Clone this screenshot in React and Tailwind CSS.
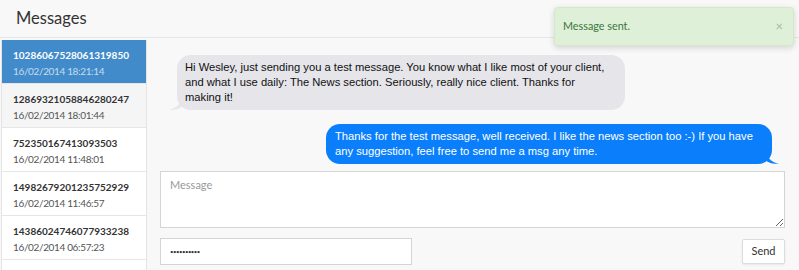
import { useState } from "react";

const threads = [
  { id: "10286067528061319850", date: "16/02/2014 18:21:14" },
  { id: "12869321058846280247", date: "16/02/2014 18:01:44" },
  { id: "752350167413093503", date: "16/02/2014 11:48:01" },
  { id: "14982679201235752929", date: "16/02/2014 11:46:57" },
  { id: "14386024746077933238", date: "16/02/2014 06:57:23" },
];

function Tail({ side, color }) {
  // little curved hook at the bottom corner of a bubble
  if (side === "left") {
    return (
      <svg className="absolute bottom-0 left-[-8px]" width="14" height="16" viewBox="0 0 14 16">
        <path d="M14 0 C13 8 9 14 0 16 C6 16 10 15 14 12 Z" fill={color} />
      </svg>
    );
  }
  return (
    <svg className="absolute bottom-0 right-[-7px]" width="14" height="16" viewBox="0 0 14 16">
      <path d="M0 0 C1 8 5 14 14 16 C8 16 4 15 0 12 Z" fill={color} />
    </svg>
  );
}

export default function App() {
  const [active] = useState(0);

  return (
    <div className="relative w-[799px] h-[270px] overflow-hidden bg-[#f8f8f8] font-['Lato',sans-serif] text-[#333]">
      {/* Header */}
      <div className="h-[38px] border-b border-[#e7e7e7] flex items-center pl-4">
        <h1 className="text-[16.5px] leading-none">Messages</h1>
      </div>

      <div className="flex pt-[2px]">
        {/* Thread list */}
        <div className="w-[146px] ml-[1px] border-l border-r border-[#e4e4e4] bg-white shrink-0">
          {threads.map((t, i) => (
            <div
              key={t.id}
              className={`h-[44px] pl-[11px] pt-[8px] border-b border-[#e6e6e6] ${
                i === active ? "bg-[#428bca] text-white" : i === 1 ? "bg-[#f5f5f5]" : "bg-white"
              }`}
            >
              <div className="text-[10px] font-bold leading-[14px]">{t.id}</div>
              <div
                className={`text-[10px] tracking-[-0.35px] leading-[18px] ${
                  i === active ? "text-white/70" : "text-[#555]"
                }`}
              >
                {t.date}
              </div>
            </div>
          ))}
          <div className="h-[44px] bg-white" />
        </div>

        {/* Conversation */}
        <div className="flex-1 pl-[13px] pr-[14px]">
          <div className="h-[131px] pt-[15px] font-['Liberation_Sans',Arial,sans-serif] text-[11.2px] leading-[15px] whitespace-nowrap">
            <div className="relative ml-[17px] w-[448px] rounded-[14px] bg-[#e5e5ea] px-[8px] py-[5px] text-[#111]">
              Hi Wesley, just sending you a test message. You know what I like most of your client,
              <br />
              and what I use daily: The News section. Seriously, really nice client. Thanks for
              <br />
              making it!
              <Tail side="left" color="#e5e5ea" />
            </div>
            <div className="flex justify-end mt-[14px] mr-[13px]">
              <div className="relative w-[446px] rounded-[14px] bg-[#0b7ffb] px-[9px] py-[5px] text-white">
                Thanks for the test message, well received. I like the news section too :-) If you have
                <br />
                any suggestion, feel free to send me a msg any time.
                <Tail side="right" color="#0b7ffb" />
              </div>
            </div>
          </div>

          <textarea
            placeholder="Message"
            className="block w-full h-[57px] bg-white border border-[#d4d4d4] px-[9px] py-[5px] text-[11px] placeholder:text-[#999] outline-none"
          />

          <div className="flex items-center justify-between mt-[10px]">
            <input
              type="password"
              defaultValue="abcdefghij"
              className="w-[252px] h-[27px] bg-white border border-[#d4d4d4] px-[9px] text-[6px] tracking-[-0.5px] outline-none"
            />
            <button className="h-[25px] w-[43px] bg-white border border-[#dcdcdc] rounded-[2px] shadow-[0_1px_2px_rgba(0,0,0,0.08)] text-[11px] text-[#333]">
              Send
            </button>
          </div>
        </div>
      </div>

      {/* Toast */}
      <div className="absolute left-[554px] top-[7px] w-[240px] h-[39px] rounded-[4px] border border-[#d6e9c6] bg-[#dff0d8] shadow-[0_2px_6px_rgba(0,0,0,0.15)] flex items-center justify-between pl-[8px] pr-[10px]">
        <span className="text-[10.8px] text-[#3c763d]">Message sent.</span>
        <span className="text-[13px] leading-none text-[#a9b9a4]">×</span>
      </div>
    </div>
  );
}
